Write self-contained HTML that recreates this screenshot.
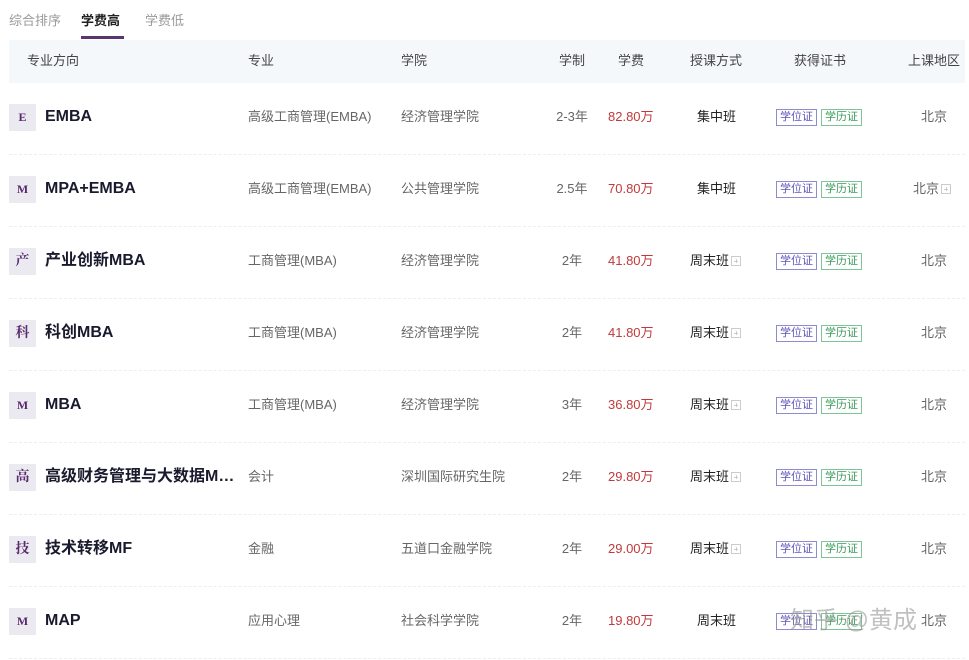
<!DOCTYPE html>
<html><head><meta charset="utf-8"><style>
*{margin:0;padding:0;box-sizing:border-box}
body{width:969px;height:660px;overflow:hidden;background:#fff;font-family:"Liberation Sans","Noto Sans CJK SC",sans-serif;color:#333;position:relative}
.a{position:absolute;white-space:nowrap;line-height:20px;height:20px}
.tab{top:11px;font-size:13px;color:#999}
.hdr{position:absolute;left:9px;top:40px;width:956px;height:43px;background:#f5f8fb}
.h{top:51px;font-size:13px;color:#444}
.sep{position:absolute;left:9px;width:956px;border-top:1px dashed #eee}
.ic{position:absolute;left:9px;width:27px;height:27px;background:#eceaf1;color:#5a2a6e;font-family:"Liberation Serif","Noto Serif CJK SC",serif;font-weight:bold;font-size:14px;text-align:center;line-height:27px}
.nm{left:45px;font-size:16px;font-weight:bold;color:#1a1a2e}
.c{font-size:13px;color:#666}
.fee{color:#c0393b}
.tag{position:absolute;font-size:11px;height:17px;line-height:15px;padding:0 3px;border:1px solid;white-space:nowrap}
.t1{color:#5b53b8;border-color:#8f8ccc}
.t2{color:#3a9a5a;border-color:#7cc49a}
.plus{display:inline-block;width:10px;height:10px;border:1px solid #ccc;vertical-align:middle;margin-left:2px;position:relative;top:-1px}
.plus:before{content:"";position:absolute;left:2px;top:4px;width:4px;height:1px;background:#ccc}
.plus:after{content:"";position:absolute;left:4px;top:2px;width:1px;height:4px;background:#ccc}
</style></head><body>
<div class="a tab" style="left:9px">综合排序</div>
<div class="a tab" style="left:81px;color:#222;font-weight:bold">学费高</div>
<div style="position:absolute;left:81px;top:36px;width:43px;height:3px;background:#5a3670"></div>
<div class="a tab" style="left:145px">学费低</div>
<div class="hdr"></div>
<div class="a h" style="left:27px">专业方向</div>
<div class="a h" style="left:248px">专业</div>
<div class="a h" style="left:401px">学院</div>
<div class="a h" style="left:559px">学制</div>
<div class="a h" style="left:618px">学费</div>
<div class="a h" style="left:690px">授课方式</div>
<div class="a h" style="left:794px">获得证书</div>
<div class="a h" style="left:908px">上课地区</div>
<div id="rows"></div>
<script>
var d=[["E","EMBA","高级工商管理(EMBA)","经济管理学院","2-3年","82.80万","集中班",0,0],
["M","MPA+EMBA","高级工商管理(EMBA)","公共管理学院","2.5年","70.80万","集中班",0,1],
["产","产业创新MBA","工商管理(MBA)","经济管理学院","2年","41.80万","周末班",1,0],
["科","科创MBA","工商管理(MBA)","经济管理学院","2年","41.80万","周末班",1,0],
["M","MBA","工商管理(MBA)","经济管理学院","3年","36.80万","周末班",1,0],
["高","高级财务管理与大数据M…","会计","深圳国际研究生院","2年","29.80万","周末班",1,0],
["技","技术转移MF","金融","五道口金融学院","2年","29.00万","周末班",1,0],
["M","MAP","应用心理","社会科学学院","2年","19.80万","周末班",0,0]];
var h="";
d.forEach(function(r,i){var c=117+72*i,t=c-10;
var ic=r[0];var icStyle=(ic=="M"||ic=="E")?"font-size:12px":"";
h+='<div class="ic" style="top:'+(c-13)+'px;'+icStyle+'">'+ic+'</div>';
h+='<div class="a nm" style="top:'+t+'px">'+r[1]+'</div>';
h+='<div class="a c" style="left:248px;top:'+t+'px">'+r[2]+'</div>';
h+='<div class="a c" style="left:401px;top:'+t+'px">'+r[3]+'</div>';
h+='<div class="a c" style="left:542px;width:60px;text-align:center;top:'+t+'px">'+r[4]+'</div>';
h+='<div class="a c fee" style="left:608px;top:'+t+'px">'+r[5]+'</div>';
h+='<div class="a c" style="left:'+(r[7]?690:697)+'px;top:'+t+'px;color:#222">'+r[6]+(r[7]?'<span class="plus"></span>':'')+'</div>';
h+='<div class="tag t1" style="left:776px;top:'+(c-8)+'px">学位证</div>';
h+='<div class="tag t2" style="left:821px;top:'+(c-8)+'px">学历证</div>';
h+='<div class="a c" style="left:'+(r[8]?913:921)+'px;top:'+t+'px">北京'+(r[8]?'<span class="plus"></span>':'')+'</div>';
h+='<div class="sep" style="top:'+(154+72*i)+'px"></div>';
});
document.getElementById("rows").innerHTML=h;
</script>
<div class="a" style="left:790px;top:606px;font-size:24px;line-height:30px;height:30px;color:rgba(150,150,150,0.6)">知乎 @黄成</div>
</body></html>
